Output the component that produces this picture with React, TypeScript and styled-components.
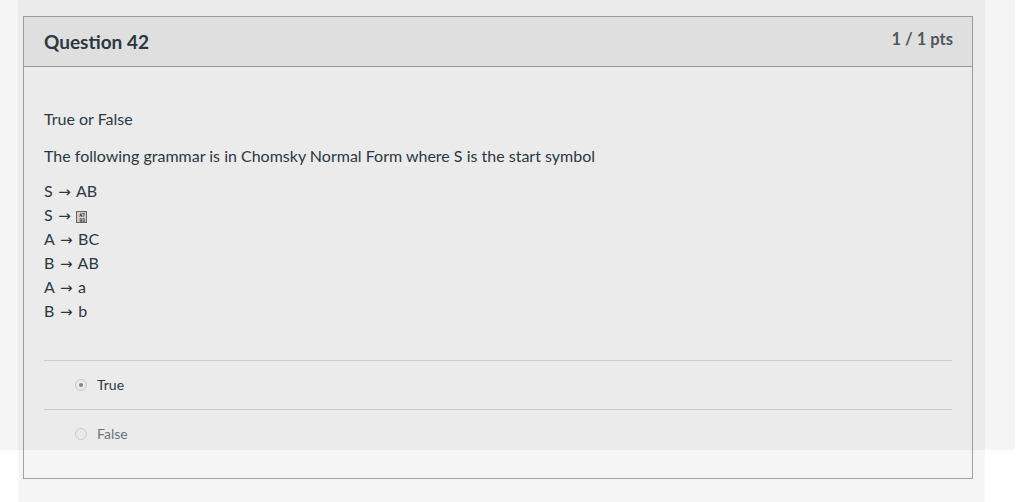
import React from "react";
import styled, { createGlobalStyle } from "styled-components";

const Global = createGlobalStyle`
  html, body { margin: 0; padding: 0; background: #ffffff; }
  body { font-family: Lato, "Open Sans", sans-serif; color: #2d3b45; }
`;

const Page = styled.div`
  position: relative;
  width: 1020px;
  height: 502px;
  overflow: hidden;
  background: #ffffff;
`;

const Column = styled.main`
  margin-left: 18px;
  width: 967px;
  height: 502px;
  background: #f5f5f5;
  padding: 16px 0 0 5px;
  box-sizing: border-box;
`;

const Card = styled.section`
  width: 950px;
  height: 463px;
  box-sizing: border-box;
  border: 1px solid #a2a2a2;
  display: flex;
  flex-direction: column;
`;

const Header = styled.header`
  height: 50px;
  box-sizing: border-box;
  background: #e9e9e9;
  border-bottom: 1px solid #a2a2a2;
  display: flex;
  justify-content: space-between;
  align-items: flex-start;
  padding: 0 19px 0 20px;
`;

const Title = styled.h2`
  margin: 0;
  padding-top: 12px;
  font-size: 19px;
  line-height: 26px;
  font-weight: 700;
  color: #2d3b45;
`;

const Points = styled.div`
  padding-top: 11px;
  font-size: 16.5px;
  line-height: 22px;
  font-weight: 700;
  color: #545a5f;
`;

const Body = styled.div`
  padding: 41px 20px 0 20px;
  flex: 1;
`;

const Para = styled.p`
  margin: 0 0 15px 0;
  font-size: 16px;
  line-height: 22px;
  color: #2d3b45;
`;

const Rules = styled.div`
  margin-top: -3px;
  display: flex;
  flex-direction: column;
`;

const Rule = styled.div`
  font-size: 16px;
  line-height: 24px;
  height: 24px;
  color: #2d3b45;
  white-space: pre;
`;

const Arrow = styled.span`
  font-family: "DejaVu Sans", sans-serif;
  font-size: 15px;
  font-weight: 400;
  margin: 0 1.5px;
`;

const Tofu = styled.span`
  display: inline-block;
  box-sizing: border-box;
  width: 11px;
  height: 12px;
  vertical-align: -1px;
  border: 1px solid #6a6a6a;
  background: #d8d8d8;
  padding-top: 1px;
  font-family: "DejaVu Sans Mono", monospace;
  font-size: 5px;
  line-height: 5px;
  font-weight: 700;
  color: #333;
  text-align: center;
  letter-spacing: -0.3px;
`;

const TofuLine = styled.span`
  display: block;
`;

const Answers = styled.div`
  margin-top: 37px;
  border-top: 1px solid #d4d4d4;
`;

const AnswerRow = styled.label<{ $last?: boolean }>`
  display: flex;
  align-items: center;
  height: 48px;
  padding-left: 31px;
  border-bottom: ${(p) => (p.$last ? "none" : "1px solid #d4d4d4")};
`;

const Radio = styled.span<{ $checked?: boolean }>`
  position: relative;
  width: 12px;
  height: 12px;
  box-sizing: border-box;
  border-radius: 50%;
  border: 1px solid #d3d3d3;
  background: #f3f3f3;
  margin-right: 10px;
  flex: none;
  &::after {
    content: "";
    display: ${(p) => (p.$checked ? "block" : "none")};
    position: absolute;
    left: 3px;
    top: 3px;
    width: 4px;
    height: 4px;
    border-radius: 50%;
    background: #8e8e8e;
  }
`;

const AnswerText = styled.span<{ $muted?: boolean }>`
  font-size: 14px;
  line-height: 20px;
  color: ${(p) => (p.$muted ? "#707a82" : "#2d3b45")};
`;

const Overlay = styled.div`
  position: absolute;
  left: 0;
  top: 0;
  width: 1015px;
  height: 450px;
  background: rgba(0, 0, 0, 0.04);
  pointer-events: none;
`;

const rules: [string, string][] = [
  ["A", "BC"],
  ["B", "AB"],
  ["A", "a"],
  ["B", "b"],
];

export default function App() {
  return (
    <Page>
      <Global />
      <Column>
        <Card>
          <Header>
            <Title>Question 42</Title>
            <Points>1 / 1 pts</Points>
          </Header>
          <Body>
            <Para>True or False</Para>
            <Para>
              The following grammar is in Chomsky Normal Form where S is the start symbol
            </Para>
            <Rules>
              <Rule>
                {"S "}
                <Arrow>→</Arrow>
                {" AB"}
              </Rule>
              <Rule>
                {"S "}
                <Arrow>→</Arrow>
                {" "}
                <Tofu>
                  <TofuLine>A7</TofuLine>
                  <TofuLine>93</TofuLine>
                </Tofu>
              </Rule>
              {rules.map(([l, r]) => (
                <Rule key={l + r}>
                  {l + " "}
                  <Arrow>→</Arrow>
                  {" " + r}
                </Rule>
              ))}
            </Rules>
            <Answers>
              <AnswerRow>
                <Radio $checked />
                <AnswerText>True</AnswerText>
              </AnswerRow>
              <AnswerRow $last>
                <Radio />
                <AnswerText $muted>False</AnswerText>
              </AnswerRow>
            </Answers>
          </Body>
        </Card>
      </Column>
      <Overlay />
    </Page>
  );
}
